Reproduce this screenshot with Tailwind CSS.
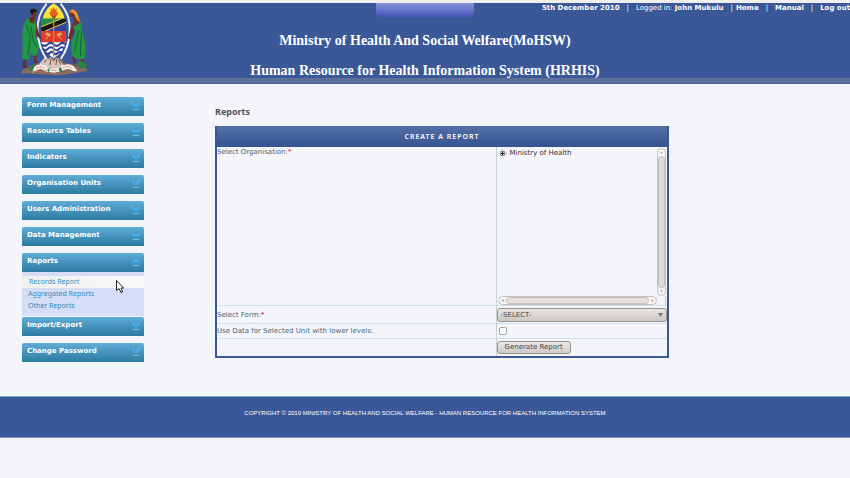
<!DOCTYPE html>
<html lang="en">
<head>
<meta charset="utf-8">
<title>HRHIS - Reports</title>
<script src="https://cdn.jsdelivr.net/npm/@tailwindcss/browser@4"></script>
</head>
<body class="min-h-screen bg-[#f3f5fa] font-['DejaVu_Sans',sans-serif] text-[7px] leading-[10px] text-[#4a6472]">
<svg class="hidden">
  <symbol id="down" viewBox="0 0 24 24">
    <path d="M1 1v7l8 8h6l8-8V1l-7 8-4-3-4 3z" fill="#3fa9ee"/>
    <path d="M1 2l7 6M23 2l-7 6" stroke="#8ad0f7" stroke-width="2"/>
    <path d="M2 22h20" stroke="#79c3e6" stroke-width="3"/>
  </symbol>
  <symbol id="up" viewBox="0 0 24 24">
    <path d="M0 17v-6l8-8h8l8 8v6l-6-4H6z" fill="#3fa9ee"/>
    <path d="M3 13l9-8 9 8" fill="none" stroke="#67bcf0" stroke-width="2"/>
    <path d="M2 22h20" stroke="#79c3e6" stroke-width="3"/>
  </symbol>
</svg>

<header class="relative border-t-[3px] border-[#f0f0f1] bg-[#3a5897] text-white">
  <div class="absolute inset-x-0 top-0 flex justify-center"><div class="h-[14px] w-[98px] rounded-b-[4px] bg-linear-to-b from-[#8a93dc] to-[#4653b8]"></div></div>
  <svg class="absolute top-0 left-[20px] h-[72px] w-[68px]" viewBox="60 10 204 216" role="img" aria-label="Coat of arms">
    <path d="M62 219q10-13 30-20l28-9 14-15h46l13 15 38 5q24 5 31 18l-30 6-66 6-60-2z" fill="#8b6a60"/>
    <path d="M118 192l18-21 8 9 8-8 9 14 9-12 16 17 14 12-20 14h-40l-25-12z" fill="#d6c6bf"/>
    <path d="M132 190l8-12M150 196l3-20M168 196l2-18M182 194l-7-12M78 206l30-7M92 212l18-8M218 196l28 8" stroke="#795047" stroke-width="3"/>
    <path d="M140 12q-30 36-27 82 2 50 27 84M182 12q30 36 27 82-2 50-27 84" fill="none" stroke="#f6f5ef" stroke-width="6"/>
    <path d="M137 15q-26 38-21 84M185 15q26 38 21 84" fill="none" stroke="#a9afb9" stroke-width="1"/>
    <path d="M161 11q-25 14-33 46h66q-8-32-33-46z" fill="#f5e43b"/>
    <path d="M124 57h74v37h-74z" fill="#268f45"/><path d="M198 64v30h-63z" fill="#3043a0"/>
    <path d="M124 83l65-26h9v11l-64 26h-10z" fill="#15191c"/>
    <path d="M124 81l60-24M136 94l62-26" stroke="#edcf38" stroke-width="3"/>
    <path d="M124 94h74v34h-74z" fill="#e43a2b"/>
    <path d="M124 128h73q-5 28-36 48-31-20-37-48z" fill="#fff"/>
    <path d="M125 134q9 9 18 0t18 0 18 0 18 0M128 147q8 9 16 0t17 0 17 0 15 0M137 160q6 7 12 0t12 0 12 0 12 0" fill="none" stroke="#2e3f92" stroke-width="6"/>
    <path d="M152 49l-4-10 5-5-1-8 6 5 1-9 7 8 5-4-2 10 6 5-6 9z" fill="#e65b22"/>
    <path d="M154 48h15l-5 10h-6z" fill="#9b5721"/><path d="M161 56v115" stroke="#c4862d" stroke-width="4"/>
    <path d="M137 120l13-18M185 120l-13-18" stroke="#c88d37" stroke-width="4"/>
    <path d="M134 103l9-5 10 7-6 6zM188 103l-9-5-10 7 6 6z" fill="#dfb052"/>
    <g fill="#6b3025">
      <circle cx="101" cy="41" r="9"/><path d="M91 52l13-3 5 22 9 34 8 7-5 6-12-10-8-25-11-7-11 30 8 26-8 3-9-32q7-35 21-51z"/>
      <path d="M70 174h10l-2 22 6 8H68zM101 160h11l-4 20 6 10h-12z"/>
      <path d="M217 51l14-2q14 15 15 45l-8 11-12-17-14 32-8-3 8-31 11-20z"/>
      <path d="M217 170h9l3 19-8 4zM240 176h9l3 16 9 4-3 4h-15z"/>
    </g>
    <path d="M90 37q0-11 11-10 10 0 10 10l-8-1-5 8z" fill="#191b1c"/>
    <path d="M78 62l8-9 3 15 13 4 1-15 6 23-3 22q6 28 12 37-4 12-8 28-13 4-20-7l-3 18q-12 4-20-1l1-62q-4-26 10-53z" fill="#249746"/>
    <path d="M80 75l11 35-7 56M93 80l6 40 12 25" fill="none" stroke="#136637" stroke-width="3"/>
    <path d="M219 81l25-13 2 28q9 21 12 50l-5 32q-22 3-35-9-6-18-4-31 3-25 13-40z" fill="#249746"/>
    <path d="M236 93l-13 65M245 98q-5 34-3 73" fill="none" stroke="#136637" stroke-width="3"/>
    <circle cx="217" cy="43" r="8" fill="#6b3025"/>
    <path d="M207 38q3-10 14-8 11 3 14 20l7 20-12-10-7-16-8-5z" fill="#e97c25"/>
    <path d="M215 31q12 3 17 24" fill="none" stroke="#f1c42b" stroke-width="3"/>
    <path d="M88 204l10-10 9 8-4 13-13 2zM142 211l10-8 8 9-12 9zM173 211l8-8 9 5-6 11zM232 194l10-12 9 7 12 5-8 11-16 1z" fill="#2e8144"/>
    <path d="M103 201q18-13 40 1l-4 10q-18-11-33 3l-10 4zM150 205q12 5 25 0l3 10q-15 8-31 1zM182 202q19-15 39-2l11 15-12-1q-16-11-33-1z" fill="#f8f0ec"/>
    <path d="M108 206q15-9 29 1M154 212h18M188 205q15-9 28 2" fill="none" stroke="#cb6865" stroke-width="3" stroke-dasharray="4 2"/>
    <path d="M66 220q40-11 76 0t78-3" fill="none" stroke="#a96a60" stroke-width="3"/>
  </svg>
  <nav class="relative flex h-[10px] justify-end whitespace-nowrap font-bold" aria-label="Account">
    <span>5th December 2010</span><span class="mx-[7px] font-normal">|</span>
    <span class="font-normal">Logged in:&nbsp;</span><span>John Mukulu</span><span class="mr-[3px] ml-[7px] font-normal">|</span>
    <a href="#">Home</a><span class="mx-[7px] font-normal">|</span>
    <a href="#">Manual</a><span class="mx-[7px] font-normal">|</span><a href="#">Log out</a>
  </nav>
  <h1 class="flex h-[65px] flex-col items-center gap-[10px] pt-[18px] font-['Liberation_Serif',serif] text-[14px] leading-5 font-bold">
    <span>Ministry of Health And Social Welfare(MoHSW)</span>
    <span class="relative z-10">Human Resource for Health Information System (HRHIS)</span>
  </h1>
  <div class="h-[6px] border-b border-[#49618f] bg-[#5c7099]"></div>
</header>

<div class="flex items-start pr-[181px] pl-[22px]">
  <nav class="mr-[71px] w-[122px] shrink-0 pt-[13px] text-[7px] font-bold text-white" aria-label="Main menu">
    <ul class="flex flex-col gap-[7px]">
      <li><a href="#" class="flex h-[19px] items-start justify-between rounded-t-[2px] bg-linear-to-b from-[#60acda] to-[#297c9f] pt-[3px] pr-[4px] pl-[5px]">Form Management<svg class="mt-[2px] h-[8px] w-[8px]"><use href="#down"/></svg></a></li>
      <li><a href="#" class="flex h-[19px] items-start justify-between rounded-t-[2px] bg-linear-to-b from-[#60acda] to-[#297c9f] pt-[3px] pr-[4px] pl-[5px]">Resource Tables<svg class="mt-[2px] h-[8px] w-[8px]"><use href="#down"/></svg></a></li>
      <li><a href="#" class="flex h-[19px] items-start justify-between rounded-t-[2px] bg-linear-to-b from-[#60acda] to-[#297c9f] pt-[3px] pr-[4px] pl-[5px]">Indicators<svg class="mt-[2px] h-[8px] w-[8px]"><use href="#down"/></svg></a></li>
      <li><a href="#" class="flex h-[19px] items-start justify-between rounded-t-[2px] bg-linear-to-b from-[#60acda] to-[#297c9f] pt-[3px] pr-[4px] pl-[5px]">Organisation Units<svg class="mt-[2px] h-[8px] w-[8px]"><use href="#down"/></svg></a></li>
      <li><a href="#" class="flex h-[19px] items-start justify-between rounded-t-[2px] bg-linear-to-b from-[#60acda] to-[#297c9f] pt-[3px] pr-[4px] pl-[5px]">Users Administration<svg class="mt-[2px] h-[8px] w-[8px]"><use href="#down"/></svg></a></li>
      <li><a href="#" class="flex h-[19px] items-start justify-between rounded-t-[2px] bg-linear-to-b from-[#60acda] to-[#297c9f] pt-[3px] pr-[4px] pl-[5px]">Data Management<svg class="mt-[2px] h-[8px] w-[8px]"><use href="#down"/></svg></a></li>
      <li>
        <a href="#" class="flex h-[19px] items-start justify-between rounded-t-[2px] bg-linear-to-b from-[#60acda] to-[#297c9f] pt-[3px] pr-[4px] pl-[5px]">Reports<svg class="mt-[2px] h-[8px] w-[8px]"><use href="#up"/></svg></a>
        <ul class="relative -mb-[6px] bg-[#d6ddf6] py-[4px] font-['Noto_Sans',sans-serif] text-[7px] leading-3 font-normal text-[#2f8fc0]">
          <li><a href="#" class="block bg-linear-to-r from-[#efefef] to-[#fafafa] pl-[7px]">Records Report</a></li>
          <li><a href="#" class="block pl-[6px]">Aggregated Reports</a></li>
          <li><a href="#" class="block pl-[6px]">Other Reports</a></li>
          <svg class="absolute top-[8px] left-[94px] h-[13px] w-[8px]" viewBox="0 0 16 26" aria-hidden="true"><path d="M1 1v20l5-4 4 8 3-1-3-8h5z" fill="#fff" stroke="#222" stroke-width="2"/></svg>
        </ul>
      </li>
      <li><a href="#" class="flex h-[19px] items-start justify-between rounded-t-[2px] bg-linear-to-b from-[#60acda] to-[#297c9f] pt-[3px] pr-[4px] pl-[5px]">Import/Export<svg class="mt-[2px] h-[8px] w-[8px]"><use href="#down"/></svg></a></li>
      <li><a href="#" class="flex h-[19px] items-start justify-between rounded-t-[2px] bg-linear-to-b from-[#60acda] to-[#297c9f] pt-[3px] pr-[4px] pl-[5px]">Change Password<svg class="mt-[2px] h-[8px] w-[8px]"><use href="#down"/></svg></a></li>
    </ul>
  </nav>

  <main class="min-w-0 flex-1 pt-[22px]">
    <h2 class="mb-[8px] font-['Noto_Sans',sans-serif] text-[9px] leading-3 font-bold text-[#505257]">Reports</h2>
    <form class="border-2 border-t-0 border-[#3a5897]">
      <table class="w-full table-fixed border-collapse">
        <colgroup><col class="w-[62%]"><col></colgroup>
        <thead><tr><th colspan="2" class="h-[21px] bg-linear-to-b from-[#5470a8] to-[#35538f] p-0 font-['Noto_Sans',sans-serif] text-[7px] font-semibold tracking-[1px] text-white">CREATE A REPORT</th></tr></thead>
        <tbody>
          <tr class="border-b border-[#cfe2e9]">
            <td class="border-r border-[#c3d3d9] p-0 align-top">Select Organisation:<span class="text-red-600">*</span></td>
            <td class="p-0">
              <div class="grid h-[158px] grid-cols-[1fr_9px] grid-rows-[1fr_9px] pt-px pr-px">
                <div class="flex items-start gap-[3px] pl-[3px] text-[#333]">
                  <svg class="mt-[1px] h-[8px] w-[7px]" viewBox="0 0 7 8" aria-hidden="true"><path d="M2.500 0v2M5 4.500h2" stroke="#999"/><path d="M0.500 2.500h4v4h-4z" fill="#fff" stroke="#888"/><path d="M1 4.500h3M2.500 3v3" stroke="#111"/></svg>
                  <span>Ministry of Health</span>
                </div>
                <div class="flex flex-col rounded-full border border-[#c4c0bd] bg-[#f6f5f4]">
                  <svg class="h-[7px] w-full" viewBox="0 0 7 7"><path d="M2 4.500l1.500-2 1.500 2z" fill="#aaa"/></svg>
                  <div class="flex-1 rounded-full border border-[#c4c0bd] bg-[#dedad7]"></div>
                  <svg class="h-[7px] w-full" viewBox="0 0 7 7"><path d="M2 2.500l1.500 2 1.500-2z" fill="#aaa"/></svg>
                </div>
                <div class="ml-px flex rounded-full border border-[#c4c0bd] bg-[#f6f5f4]">
                  <svg class="h-full w-[7px]" viewBox="0 0 7 7"><path d="M4.500 2l-2 1.500 2 1.500z" fill="#999"/></svg>
                  <div class="flex-1 rounded-full border border-[#c4c0bd] bg-[#e2dfdc]"></div>
                  <svg class="h-full w-[7px]" viewBox="0 0 7 7"><path d="M2.500 2l2 1.500-2 1.500z" fill="#999"/></svg>
                </div>
                <div class="border-r border-[#c8ccd0]"></div>
              </div>
            </td>
          </tr>
          <tr class="border-b border-[#cfe2e9]">
            <td class="h-[18px] border-r border-[#c3d3d9] p-0"><label for="form">Select Form:<span class="text-red-600">*</span></label></td>
            <td class="p-0">
              <div class="relative">
                <select id="form" class="block h-[14px] w-full appearance-none rounded-[3px] border border-[#98938f] bg-linear-to-b from-[#e9e6e4] to-[#cbc6c2] px-[3px] text-[7px] leading-3 text-[#444]"><option>-SELECT-</option></select>
                <svg class="pointer-events-none absolute top-[5px] right-[4px] h-[4px] w-[5px]" viewBox="0 0 5 4"><path d="M0 0h5L2.500 4z" fill="#777"/></svg>
              </div>
            </td>
          </tr>
          <tr class="border-b border-[#cfe2e9]">
            <td class="h-[15px] border-r border-[#c3d3d9] p-0"><label for="lower">Use Data for Selected Unit with lower levels:</label></td>
            <td class="p-0 pl-[2px]"><input id="lower" type="checkbox" class="block h-[8px] w-[8px] appearance-none rounded-[2px] border border-[#a5a5a5] bg-white"></td>
          </tr>
          <tr>
            <td class="h-[17px] border-r border-[#c3d3d9] p-0"></td>
            <td class="p-0"><button type="button" class="block h-[13px] rounded-[3px] border border-[#98938f] bg-linear-to-b from-[#ebe9e7] to-[#cfcac6] px-[7px] text-[7px] leading-[11px] text-[#444]">Generate Report</button></td>
          </tr>
        </tbody>
      </table>
    </form>
  </main>
</div>

<footer class="mt-[34px] h-[42px] border-t border-b border-t-[#7fb0c8] border-b-[#8093b5] bg-[#3a5897] pt-[11px] text-center font-['Liberation_Sans',sans-serif] text-[6px] text-white">COPYRIGHT © 2010 MINISTRY OF HEALTH AND SOCIAL WELFARE - HUMAN RESOURCE FOR HEALTH INFORMATION SYSTEM</footer>
</body>
</html>
